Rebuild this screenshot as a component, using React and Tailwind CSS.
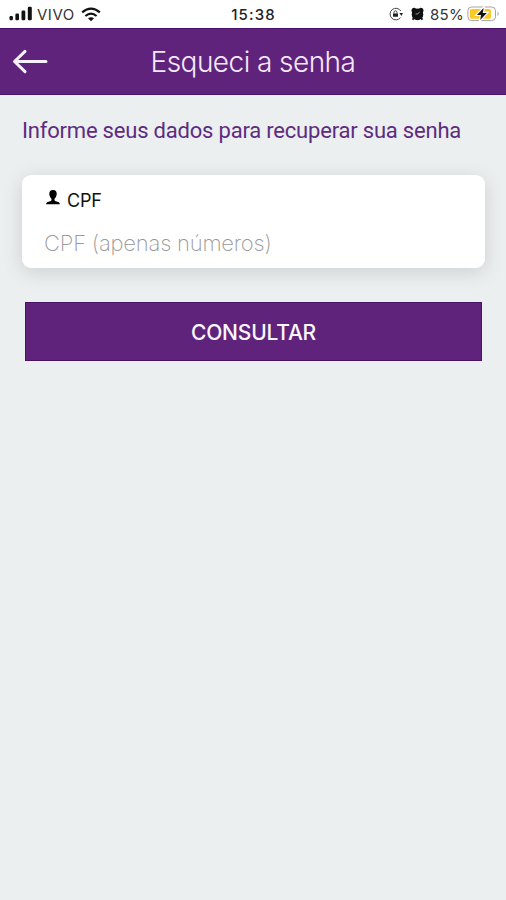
function SignalIcon() {
  return (
    <svg width="24" height="16" viewBox="0 0 24 16" fill="#111">
      <rect x="0.5" y="10" width="3.4" height="4.3" rx="1.2" />
      <rect x="6.4" y="7.5" width="3.6" height="6.8" rx="1.2" />
      <rect x="12.5" y="4.5" width="3.8" height="9.8" rx="1.2" />
      <rect x="18.8" y="0.8" width="4" height="13.5" rx="1.2" />
    </svg>
  );
}

function WifiIcon() {
  return (
    <svg width="20" height="15" viewBox="0 0 20 15" fill="none" stroke="#111" strokeWidth="2.2">
      <path d="M1.2 5.4 Q10 -2 18.8 5.4" />
      <path d="M4.4 9 Q10 4.4 15.6 9" />
      <path d="M7 11.2 Q10 9.2 13 11.2 L10 14.2 Z" fill="#111" stroke="none" />
    </svg>
  );
}

function RotationLockIcon() {
  return (
    <svg width="14" height="14" viewBox="0 0 14 14" fill="none" stroke="#444" strokeWidth="1">
      <path d="M11.8 4 A5.8 5.8 0 1 0 11.5 10.6" />
      <path d="M10.4 6 H14 L12.4 9 Z" fill="#222" stroke="none" />
      <path d="M5 6.8 V5.3 A1.5 1.5 0 0 1 8 5.3 V6.8" />
      <rect x="4" y="6.5" width="5" height="3.2" rx="0.5" fill="#222" stroke="none" />
    </svg>
  );
}

function AlarmIcon() {
  return (
    <svg width="13" height="14" viewBox="0 0 13 14" fill="#111">
      <circle cx="6.5" cy="7.4" r="5.8" />
      <path d="M0.4 4 Q0.4 0.8 3.6 0.7 L6 2.2 L1.6 6 Z M12.6 4 Q12.6 0.8 9.4 0.7 L7 2.2 L11.4 6 Z" />
      <path d="M2.8 11 L1.6 12.8 M10.2 11 L11.4 12.8" stroke="#111" strokeWidth="1.8" />
      <path d="M8.6 4.8 L6.7 7 H4.6" fill="none" stroke="#bbb" strokeWidth="0.8" />
    </svg>
  );
}

function BatteryIcon() {
  return (
    <svg width="33" height="16" viewBox="0 0 33 16">
      <rect x="0.9" y="1" width="27.6" height="13.6" rx="3.8" fill="#fff" stroke="#a5a5a5" strokeWidth="1" />
      <rect x="2.8" y="2.9" width="21.2" height="9.8" rx="1.8" fill="#fcc826" />
      <path d="M16.6 2 L10 8.9 H14 L13.2 14 L19.8 7 H15.8 Z" fill="#111" stroke="#fff" strokeWidth="2.4" paintOrder="stroke" />
      <path d="M30.5 5.3 Q33 7.8 30.5 10.3 Z" fill="#aaa" />
    </svg>
  );
}

function UserIcon() {
  return (
    <svg width="14" height="15" viewBox="0 0 14 15" fill="#000">
      <path d="M7 0 C9.8 0 11 1.9 10.7 4.4 C10.5 6.4 9.4 7.6 8.6 8.8 C8.3 9.6 8.4 10.6 9.2 11.1 C10.8 11.9 13.8 11.9 13.8 14.2 H0.2 C0.2 11.9 3.2 11.9 4.8 11.1 C5.6 10.6 5.7 9.6 5.4 8.8 C4.6 7.6 3.5 6.4 3.3 4.4 C3 1.9 4.2 0 7 0 Z" />
    </svg>
  );
}

function StatusBar() {
  return (
    <div className="grid h-7 grid-cols-3 items-center bg-white pr-[6px] pl-[9px] font-['Inter',sans-serif] text-[#222]">
      <div className="flex items-center">
        <SignalIcon />
        <span className="ml-[4px] text-[15px] leading-none tracking-[0.5px] text-[#333]">VIVO</span>
        <span className="ml-[6px]"><WifiIcon /></span>
      </div>
      <div className="-ml-[2px] text-center text-[15px] leading-none font-medium tracking-[1.1px]">15:38</div>
      <div className="flex items-center justify-end">
        <RotationLockIcon />
        <span className="ml-[8px]"><AlarmIcon /></span>
        <span className="ml-[6px] text-[15px] leading-none tracking-[0.3px] text-[#333]">85%</span>
        <span className="ml-[3px]"><BatteryIcon /></span>
      </div>
    </div>
  );
}

export default function App() {
  return (
    <div className="h-[900px] w-[506px] overflow-hidden bg-[#ebeff0] font-['Inter',sans-serif]">
      <StatusBar />
      <header className="grid h-[67px] grid-cols-[60px_1fr_60px] items-center border-y border-[#49116a] bg-[#60237c]">
        <button className="pl-[12px]" aria-label="Voltar">
          <svg width="37" height="25" viewBox="0 0 37 25" fill="none" stroke="#f6f0fa" strokeWidth="3" strokeLinecap="round" strokeLinejoin="round">
            <path d="M34 12.5 H3 M13 2.3 L2.5 12.5 L13 22.7" />
          </svg>
        </button>
        <h1 className="text-center text-[28px] leading-none font-light tracking-[-0.55px] whitespace-nowrap text-[#f3e9f8]">Esqueci a senha</h1>
      </header>
      <main className="px-[22px] pt-[22px]">
        <p className="h-7 font-['Roboto',sans-serif] text-[22px] leading-7 tracking-[-0.2px] whitespace-nowrap text-[#5f2b80]">
          Informe seus dados para recuperar sua senha
        </p>
        <section className="mt-[30px] h-[93px] w-[463px] rounded-[9px] bg-white pt-[13px] pl-[22px] shadow-[0_4px_20px_rgba(0,0,0,0.13)]">
          <label className="flex h-6 items-center text-[18px] leading-6 tracking-[-0.2px] text-[#111]">
            <span className="mr-[7px] ml-[2px] -mt-[5px]"><UserIcon /></span>
            <span className="pt-px">CPF</span>
          </label>
          <div className="mt-[17px] h-7 text-[22px] leading-7 font-extralight tracking-[-0.2px] whitespace-nowrap text-[#999]">
            CPF (apenas números)
          </div>
        </section>
        <button className="mt-[34px] ml-[3px] block h-[59px] w-[457px] border border-[#49116a] bg-[#60237c] pt-[2px] text-[21px] font-medium tracking-[-0.2px] text-[#fbf6fd]">
          CONSULTAR
        </button>
      </main>
    </div>
  );
}
